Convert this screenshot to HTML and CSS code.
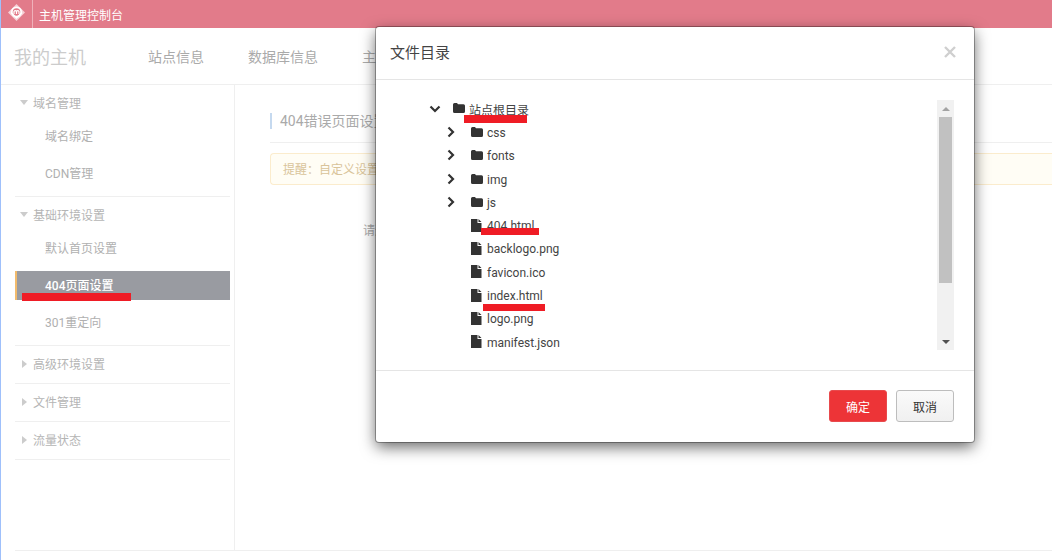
FILE: index.html
```html
<!DOCTYPE html>
<html lang="zh-CN">
<head>
<meta charset="utf-8">
<title>主机管理控制台</title>
<link rel="stylesheet" href="styles.css">
</head>
<body>
<div class="app">
  <header class="topbar">
    <div class="logo">
      <svg width="17" height="17" viewBox="0 0 17 17"><path d="M8.500 0l8.500 8.500-8.500 8.500L0 8.500z" fill="#f6cfd5"/><circle cx="8.500" cy="8" r="5.500" fill="#fff"/><circle cx="8.500" cy="8" r="3.800" fill="#e27b8a"/><path d="M6 10V7.500q1.200-1.800 2.500 0V10M8.500 7.500q1.200-1.800 2.500 0V10" fill="none" stroke="#fff" stroke-width="1.200"/><path d="M3 8.500l5.500 5.500 5.500-5.500" fill="none" stroke="#fff" stroke-width="1.400"/></svg>
    </div>
    <div class="brand">主机管理控制台</div>
  </header>
  <nav class="mainnav">
    <div class="nav-title">我的主机</div>
    <a class="nav-link">站点信息</a>
    <a class="nav-link">数据库信息</a>
    <a class="nav-link">主机管理</a>
  </nav>
  <div class="layout">
    <aside class="sidebar">
      <section class="group">
        <div class="group-head"><i class="caret-down"></i>域名管理</div>
        <div class="item">域名绑定</div>
        <div class="item">CDN管理</div>
      </section>
      <section class="group">
        <div class="group-head"><i class="caret-down"></i>基础环境设置</div>
        <div class="item">默认首页设置</div>
        <div class="item active">404页面设置</div>
        <div class="item">301重定向</div>
      </section>
      <section class="group">
        <div class="group-head"><i class="caret-right"></i>高级环境设置</div>
      </section>
      <section class="group">
        <div class="group-head"><i class="caret-right"></i>文件管理</div>
      </section>
      <section class="group">
        <div class="group-head"><i class="caret-right"></i>流量状态</div>
      </section>
    </aside>
    <main class="content">
      <h2 class="page-title">404错误页面设置</h2>
      <div class="alert">提醒：自定义设置404错误页面后，访问不存在的页面时将显示该页面</div>
      <div class="form-row">请选择404页面文件</div>
    </main>
  </div>
</div>

<div class="modal">
  <div class="modal-head">
    <div class="modal-title">文件目录</div>
    <svg class="close" width="14" height="14" viewBox="0 0 14 14"><path d="M2 2l10 10M12 2L2 12" stroke="#cfcfcf" stroke-width="2.400" fill="none"/></svg>
  </div>
  <div class="modal-body">
    <div class="tree">
      <div class="row root">
        <svg class="chev" width="14" height="14" viewBox="0 0 14 14"><path d="M2.500 4.500L7 9l4.500-4.500" fill="none" stroke="#333" stroke-width="2.200"/></svg>
        <svg class="ficon" width="12" height="12" viewBox="0 0 12 12"><path d="M0 2.500q0-1.500 1.500-1.500h2.500l1 1.300h5.500q1.500 0 1.500 1.500v5.700q0 1.500-1.500 1.500h-9q-1.500 0-1.500-1.500z" fill="#333"/></svg>
        <span>站点根目录</span>
      </div>
      <div class="row dir">
        <svg class="chev" width="14" height="14" viewBox="0 0 14 14"><path d="M4.500 2.500L9 7l-4.500 4.500" fill="none" stroke="#333" stroke-width="2.200"/></svg>
        <svg class="ficon" width="12" height="12" viewBox="0 0 12 12"><path d="M0 2.500q0-1.500 1.500-1.500h2.500l1 1.300h5.500q1.500 0 1.500 1.500v5.700q0 1.500-1.500 1.500h-9q-1.500 0-1.500-1.500z" fill="#333"/></svg>
        <span>css</span>
      </div>
      <div class="row dir">
        <svg class="chev" width="14" height="14" viewBox="0 0 14 14"><path d="M4.500 2.500L9 7l-4.500 4.500" fill="none" stroke="#333" stroke-width="2.200"/></svg>
        <svg class="ficon" width="12" height="12" viewBox="0 0 12 12"><path d="M0 2.500q0-1.500 1.500-1.500h2.500l1 1.300h5.500q1.500 0 1.500 1.500v5.700q0 1.500-1.500 1.500h-9q-1.500 0-1.500-1.500z" fill="#333"/></svg>
        <span>fonts</span>
      </div>
      <div class="row dir">
        <svg class="chev" width="14" height="14" viewBox="0 0 14 14"><path d="M4.500 2.500L9 7l-4.500 4.500" fill="none" stroke="#333" stroke-width="2.200"/></svg>
        <svg class="ficon" width="12" height="12" viewBox="0 0 12 12"><path d="M0 2.500q0-1.500 1.500-1.500h2.500l1 1.300h5.500q1.500 0 1.500 1.500v5.700q0 1.500-1.500 1.500h-9q-1.500 0-1.500-1.500z" fill="#333"/></svg>
        <span>img</span>
      </div>
      <div class="row dir">
        <svg class="chev" width="14" height="14" viewBox="0 0 14 14"><path d="M4.500 2.500L9 7l-4.500 4.500" fill="none" stroke="#333" stroke-width="2.200"/></svg>
        <svg class="ficon" width="12" height="12" viewBox="0 0 12 12"><path d="M0 2.500q0-1.500 1.500-1.500h2.500l1 1.300h5.500q1.500 0 1.500 1.500v5.700q0 1.500-1.500 1.500h-9q-1.500 0-1.500-1.500z" fill="#333"/></svg>
        <span>js</span>
      </div>
      <div class="row file"><svg class="ficon" width="11" height="13" viewBox="0 0 11 13"><path d="M0 0h6.500v4h4v9H0zM7.500 0l3 3h-3z" fill="#333"/></svg><span>404.html</span></div>
      <div class="row file"><svg class="ficon" width="11" height="13" viewBox="0 0 11 13"><path d="M0 0h6.500v4h4v9H0zM7.500 0l3 3h-3z" fill="#333"/></svg><span>backlogo.png</span></div>
      <div class="row file"><svg class="ficon" width="11" height="13" viewBox="0 0 11 13"><path d="M0 0h6.500v4h4v9H0zM7.500 0l3 3h-3z" fill="#333"/></svg><span>favicon.ico</span></div>
      <div class="row file"><svg class="ficon" width="11" height="13" viewBox="0 0 11 13"><path d="M0 0h6.500v4h4v9H0zM7.500 0l3 3h-3z" fill="#333"/></svg><span>index.html</span></div>
      <div class="row file"><svg class="ficon" width="11" height="13" viewBox="0 0 11 13"><path d="M0 0h6.500v4h4v9H0zM7.500 0l3 3h-3z" fill="#333"/></svg><span>logo.png</span></div>
      <div class="row file"><svg class="ficon" width="11" height="13" viewBox="0 0 11 13"><path d="M0 0h6.500v4h4v9H0zM7.500 0l3 3h-3z" fill="#333"/></svg><span>manifest.json</span></div>
    </div>
    <div class="scrollbar">
      <div class="sb-btn"><i class="sb-up"></i></div>
      <div class="sb-track"><div class="sb-thumb"></div></div>
      <div class="sb-btn"><i class="sb-down"></i></div>
    </div>
  </div>
  <div class="modal-foot">
    <button class="btn btn-primary">确定</button>
    <button class="btn btn-default">取消</button>
  </div>
</div>

<div class="mark mark-side"></div>
<div class="mark mark-root"></div>
<div class="mark mark-404"></div>
<div class="mark mark-index"></div>
</body>
</html>
```
FILE: styles.css
```css
* { box-sizing: border-box; }
html, body { margin: 0; padding: 0; height: 100%; overflow: hidden; }
body {
  font-family: Roboto, "Noto Sans CJK SC", sans-serif;
  font-size: 12px;
  color: #aaa;
  background: #fff;
}
.app {
  height: 560px;
  display: flex;
  flex-direction: column;
  border-left: 1px solid #9fc0fb;
}
.topbar {
  height: 28px;
  flex: none;
  display: flex;
  align-items: center;
  background: #e27b8a;
}
.logo {
  width: 32px;
  height: 28px;
  padding: 4px 0 0 7px;
  border-right: 1px solid #efb1ba;
}
.logo svg { display: block; }
.brand { margin-left: 6px; color: #fff; font-size: 12px; }
.mainnav {
  height: 57px;
  flex: none;
  display: flex;
  align-items: center;
  padding-left: 13px;
  border-bottom: 1px solid #efefef;
}
.nav-title { width: 134px; font-size: 18px; color: #ccc; }
.nav-link { margin-right: 44px; font-size: 14px; color: #aaa; }
.layout {
  flex: 1;
  display: flex;
  margin-left: 14px;
  margin-bottom: 9px;
  border-bottom: 1px solid #efefef;
}
.sidebar {
  width: 220px;
  flex: none;
  padding-right: 4px;
  border-right: 1px solid #efefef;
}
.group { border-bottom: 1px solid #efefef; }
.group-head {
  height: 37px;
  display: flex;
  align-items: center;
  padding: 0 0 2px 5px;
  font-size: 12px;
  color: #b5b5b5;
}
.caret-down, .caret-right { display: block; width: 13px; flex: none; height: 8px; }
.caret-down::before {
  content: "";
  display: block;
  margin-top: 1px;
  border-left: 4px solid transparent;
  border-right: 4px solid transparent;
  border-top: 5px solid #ccc;
  width: 0;
}
.caret-right::before {
  content: "";
  display: block;
  margin-left: 2px;
  border-top: 4px solid transparent;
  border-bottom: 4px solid transparent;
  border-left: 5px solid #ccc;
  width: 0;
}
.item {
  height: 29px;
  margin-bottom: 8px;
  padding: 0 0 2px 30px;
  display: flex;
  align-items: center;
  color: #b0b0b0;
  font-size: 12px;
}
.item.active {
  background: #999ba1;
  border-left: 2px solid #f2bb6c;
  padding-left: 28px;
  color: #fff;
  font-weight: 500;
}
.content { flex: 1; padding: 28px 0 0 35px; min-width: 0; }
.page-title {
  margin: 0;
  height: 30px;
  font-size: 14px;
  font-weight: 400;
  line-height: 16px;
  padding-left: 10px;
  color: #aaa;
  white-space: nowrap;
  border-bottom: 1px solid #efefef;
  position: relative;
}
.page-title::before {
  content: "";
  position: absolute;
  left: 0;
  top: 0;
  width: 2px;
  height: 16px;
  background: #c5d9ef;
}
.alert {
  margin-top: 10px;
  height: 32px;
  line-height: 30px;
  padding: 1px 0 0 12px;
  white-space: nowrap;
  overflow: hidden;
  background: #fffdf5;
  border: 1px solid #fbeccd;
  border-radius: 4px 0 0 4px;
  border-right: 0;
  color: #d9c49a;
}
.form-row { margin: 36px 0 0 93px; color: #aaa; font-size: 12px; }

.modal {
  position: absolute;
  left: 376px;
  top: 27px;
  width: 598px;
  height: 415px;
  display: flex;
  flex-direction: column;
  background: #fff;
  border-radius: 3px;
  box-shadow: 0 0 0 1px rgba(0,0,0,.3), 0 5px 15px rgba(0,0,0,.6);
  color: #333;
}
.modal-head {
  height: 53px;
  flex: none;
  display: flex;
  align-items: center;
  justify-content: space-between;
  padding: 0 17px 3px 14px;
  border-bottom: 1px solid #e5e5e5;
}
.modal-title { font-size: 15px; color: #444; }
.close { display: block; }
.modal-body {
  flex: 1;
  display: flex;
  justify-content: space-between;
  padding: 20px 20px 20px 0;
  min-height: 0;
}
.tree { padding-left: 52px; margin-top: -2px; font-size: 12px; }
.row { height: 23.300px; display: flex; align-items: center; color: #444; white-space: nowrap; }
.root .chev { margin: -1px 11px 0 0; }
.root .ficon { margin: -3px 4px 0 0; }
.dir { padding-left: 16px; }
.dir .chev { margin: -2px 13px 0 0; }
.dir .ficon { margin: -2px 4px 0 0; }
.file { padding-left: 43px; }
.file .ficon { margin: -2px 5px 0 0; }
.scrollbar {
  width: 17px;
  display: flex;
  flex-direction: column;
  background: #f1f1f1;
}
.sb-btn { height: 17px; flex: none; display: flex; align-items: center; justify-content: center; }
.sb-up {
  display: block;
  border-left: 4px solid transparent;
  border-right: 4px solid transparent;
  border-bottom: 4px solid #a3a3a3;
}
.sb-down {
  display: block;
  border-left: 4px solid transparent;
  border-right: 4px solid transparent;
  border-top: 4px solid #505050;
}
.sb-track { flex: 1; padding: 0 2px; }
.sb-thumb { height: 166px; background: #c1c1c1; }
.modal-foot {
  height: 72px;
  flex: none;
  display: flex;
  justify-content: flex-end;
  gap: 9px;
  padding: 19px 20px 0 0;
  border-top: 1px solid #e5e5e5;
}
.btn {
  width: 58px;
  height: 32px;
  border-radius: 3px;
  font-family: inherit;
  font-size: 12px;
  padding: 0;
}
.btn-primary {
  color: #fff;
  background: #ed3437;
  border: 1px solid #e84a4d;
}
.btn-default {
  color: #333;
  background: linear-gradient(#fafafa, #f0f0f0);
  border: 1px solid #bdbdbd;
}
.mark { position: absolute; background: #ef1c25; }
.mark-side { left: 22px; top: 293px; width: 109px; height: 8px; }
.mark-root { left: 464px; top: 115px; width: 63px; height: 8px; }
.mark-404 { left: 481px; top: 228px; width: 58px; height: 7px; }
.mark-index { left: 483px; top: 304px; width: 62px; height: 7px; }
```
